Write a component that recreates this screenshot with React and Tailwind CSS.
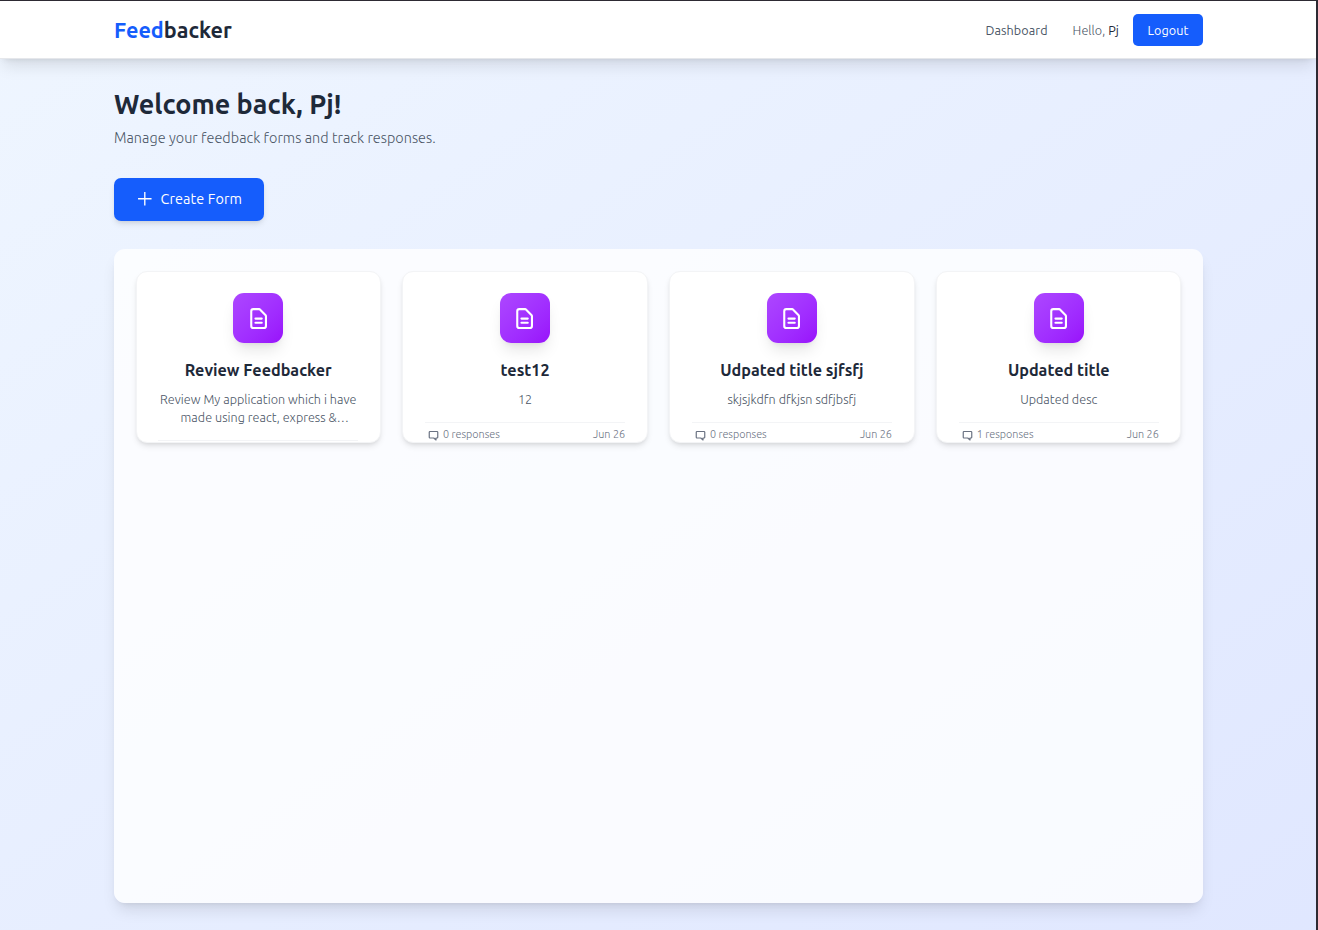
import React from 'react';

const forms = [
  { title: 'Review Feedbacker', desc: ['Review My application which i have', 'made using react, express &…'] },
  { title: 'test12', desc: ['12'], responses: '0 responses', date: 'Jun 26' },
  { title: 'Udpated title sjfsfj', desc: ['skjsjkdfn dfkjsn sdfjbsfj'], responses: '0 responses', date: 'Jun 26' },
  { title: 'Updated title', desc: ['Updated desc'], responses: '1 responses', date: 'Jun 26' },
];

function DocumentIcon() {
  return (
    <svg className="size-[25.2px]" viewBox="0 0 24 24" fill="none" stroke="currentColor" strokeWidth="2" strokeLinecap="round" strokeLinejoin="round">
      <path d="M9 12h6m-6 4h6m2 5H7a2 2 0 01-2-2V5a2 2 0 012-2h5.586a1 1 0 01.707.293l5.414 5.414a1 1 0 01.293.707V19a2 2 0 01-2 2z" />
    </svg>
  );
}

function MessageIcon() {
  return (
    <svg className="mt-[3px] size-[11px]" viewBox="0 0 22 22" fill="none" stroke="currentColor" strokeWidth="2.4" strokeLinecap="round" strokeLinejoin="round">
      <path d="M4 3h14a1.500 1.500 0 011.500 1.500v10a1.500 1.500 0 01-1.500 1.500h-2v4l-4.500-4H4a1.500 1.500 0 01-1.500-1.500v-10A1.500 1.500 0 014 3z" />
    </svg>
  );
}

function FormCard({ form }) {
  return (
    <article className="h-[172px] overflow-hidden rounded-[11px] border border-gray-100 bg-white px-[21.6px] pt-[21px] shadow-md">
      <div className="mx-auto flex size-[50.4px] items-center justify-center rounded-[11px] bg-linear-to-br from-purple-500 to-purple-600 text-white shadow-lg">
        <DocumentIcon />
      </div>
      <h3 className="mt-[14.6px] text-center text-[16.2px] leading-[25px] font-semibold whitespace-nowrap text-gray-800">{form.title}</h3>
      <div className="mt-[7px] text-center text-[12.6px] leading-[18px] font-light tracking-[0.04px] text-gray-600">
        {form.desc.map((line) => <p key={line} className="whitespace-nowrap even:pl-[13px]">{line}</p>)}
      </div>
      <div className="mt-[14px] flex h-[23px] items-center justify-between border-t border-gray-100 pl-[3px] text-[10.8px] font-light text-gray-500">
        {form.responses && (
          <>
            <span className="flex items-center gap-[4px]"><MessageIcon />{form.responses}</span>
            <span>{form.date}</span>
          </>
        )}
      </div>
    </article>
  );
}

export default function App() {
  return (
    <div className="h-[930px] w-[1318px] overflow-hidden border-t border-r-2 border-[#2d2a33] bg-linear-to-br from-blue-50 to-indigo-100 font-['Ubuntu','Noto_Sans',sans-serif]">
      <header className="flex h-[58px] items-center justify-between border-b border-gray-200 bg-white pr-[113px] pl-[114px] shadow-lg">
        <div className="pt-[2px] text-[21.6px] font-semibold text-gray-800"><span className="text-blue-600">Feed</span>backer</div>
        <nav className="flex items-center text-[12.6px] text-gray-600">
          <a className="mr-[25px] pt-[2px] tracking-[0.08px]">Dashboard</a>
          <span className="mr-[14px] pt-[2px] font-light tracking-[0.08px]">Hello, <span className="font-normal text-gray-800">Pj</span></span>
          <button className="h-[32px] w-[70px] rounded-[5px] bg-blue-600 pt-[2px] tracking-[0.1px] text-white">Logout</button>
        </nav>
      </header>
      <main className="pt-[29px] pr-[113px] pl-[114px]">
        <h1 className="text-[27px] leading-[33px] font-semibold text-gray-800">Welcome back, Pj!</h1>
        <p className="mt-[5px] text-[14.4px] leading-[24px] font-light tracking-[0.055px] text-gray-600">Manage your feedback forms and track responses.</p>
        <button className="mt-[28px] flex h-[43px] w-[150px] items-center rounded-[7px] bg-blue-600 pl-[20px] text-[14.4px] tracking-[0.1px] text-white shadow-md">
          <svg className="mr-[5px] mb-[1px] size-[21.6px]" viewBox="0 0 24 24" fill="none" stroke="currentColor" strokeWidth="1.5"><path d="M12 4.5v15m7.5-7.5h-15" /></svg>
          Create Form
        </button>
        <section className="mt-[28px] grid h-[654px] grid-cols-4 content-start gap-[21.6px] rounded-[11px] bg-white/80 px-[21.6px] py-[22px] shadow-lg">
          {forms.map((form) => <FormCard key={form.title} form={form} />)}
        </section>
      </main>
    </div>
  );
}
